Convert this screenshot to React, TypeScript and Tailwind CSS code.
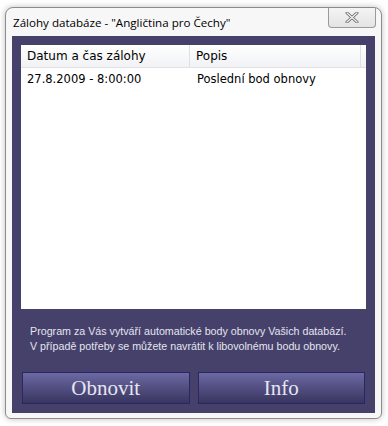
import React from "react";

const ui = { fontFamily: "Tahoma, 'DejaVu Sans', 'Liberation Sans', sans-serif" };
const small = { fontFamily: "Tahoma, 'Liberation Sans', Arial, sans-serif" };
const title = { fontFamily: "'Segoe UI', 'Open Sans', 'Noto Sans', sans-serif" };
const serif = { fontFamily: "'Times New Roman', 'Liberation Serif', serif" };

function CloseButton() {
    return (
        <div className="absolute right-[5px] top-0 w-[48px] h-[20px] rounded-b-[4px] border border-t-0 border-[#9a9a9a] bg-gradient-to-b from-[#f4f4f4] to-[#e4e4e4] flex items-center justify-center">
            <svg width="14" height="11" viewBox="0 0 14 11">
                <path d="M2 1 L12 10 M12 1 L2 10" stroke="#6b6b6b" strokeWidth="3" strokeLinecap="round" />
                <path d="M2 1 L12 10 M12 1 L2 10" stroke="#f4f4f4" strokeWidth="1.2" strokeLinecap="round" />
            </svg>
        </div>
    );
}

function Button({ text }: { text: string }) {
    return (
        <button
            style={serif}
            className="flex-1 h-[32px] border border-[#2a2664] bg-gradient-to-b from-[#6c69a4] to-[#39355f] text-[#e6e6f0] text-[21px] leading-none flex items-center justify-center"
        >
            {text}
        </button>
    );
}

export default function App() {
    return (
        <div className="w-[388px] h-[426px] bg-white pl-[5px] pt-[7px]">
            <div className="relative w-[377px] h-[412px] rounded-t-[8px] rounded-b-[6px] border border-[#8c8c8c] bg-[#f7f7f7] shadow-[0_0_6px_rgba(0,0,0,0.25)]">
                <CloseButton />
                <div style={title} className="h-[28px] pl-[7px] pt-[8px] text-[11.6px] leading-[14px] text-black whitespace-nowrap">
                    Zálohy databáze - "Angličtina pro Čechy"
                </div>
                <div className="ml-[6px] w-[363px] h-[377px] bg-[#45416b] px-[9px] pt-[9px] flex flex-col">
                    <div style={ui} className="w-[345px] h-[264px] bg-white text-[12px] text-black">
                        <div className="h-[23px] flex border-b border-[#e2e2e2] bg-gradient-to-b from-white to-[#f1f2f5]">
                            <div className="w-[169px] border-r border-[#e0e0e0] pl-[6px] flex items-center">Datum a čas zálohy</div>
                            <div className="w-[171px] border-r border-[#e0e0e0] pl-[6px] flex items-center">Popis</div>
                        </div>
                        <div className="h-[24px] flex items-center text-[11.5px]">
                            <div className="w-[169px] pl-[6px]">27.8.2009 - 8:00:00</div>
                            <div className="pl-[7px]">Poslední bod obnovy</div>
                        </div>
                    </div>
                    <div style={small} className="pl-[9px] pt-[15px] text-[10.7px] leading-[15px] text-[#e4e4ef] whitespace-nowrap">
                        <p>Program za Vás vytváří automatické body obnovy Vašich databází.</p>
                        <p>V případě potřeby se můžete navrátit k libovolnému bodu obnovy.</p>
                    </div>
                    <div className="mt-[18px] flex gap-[8px] pl-px pr-px">
                        <Button text="Obnovit" />
                        <Button text="Info" />
                    </div>
                </div>
            </div>
        </div>
    );
}
